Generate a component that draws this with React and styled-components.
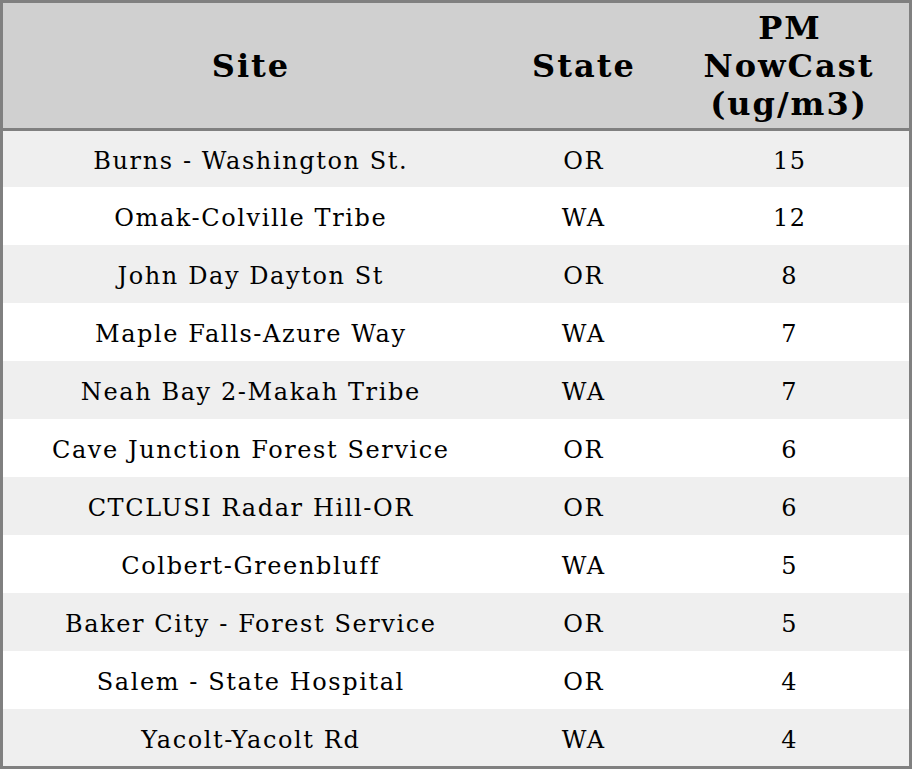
import styled, { createGlobalStyle } from "styled-components";

const GlobalStyle = createGlobalStyle`
    html, body {
        margin: 0;
        padding: 0;
        background: #fff;
    }
`;

const rows = [
    { site: "Burns - Washington St.", state: "OR", pm: 15 },
    { site: "Omak-Colville Tribe", state: "WA", pm: 12 },
    { site: "John Day Dayton St", state: "OR", pm: 8 },
    { site: "Maple Falls-Azure Way", state: "WA", pm: 7 },
    { site: "Neah Bay 2-Makah Tribe", state: "WA", pm: 7 },
    { site: "Cave Junction Forest Service", state: "OR", pm: 6 },
    { site: "CTCLUSI Radar Hill-OR", state: "OR", pm: 6 },
    { site: "Colbert-Greenbluff", state: "WA", pm: 5 },
    { site: "Baker City - Forest Service", state: "OR", pm: 5 },
    { site: "Salem - State Hospital", state: "OR", pm: 4 },
    { site: "Yacolt-Yacolt Rd", state: "WA", pm: 4 },
];

export default function App() {
    return (
        <>
            <GlobalStyle />
            <Table>
                <Header>
                    <HeadCell>Site</HeadCell>
                    <HeadCell>State</HeadCell>
                    <HeadCell>
                        PM
                        <br />
                        NowCast
                        <br />
                        (ug/m3)
                    </HeadCell>
                </Header>
                <Body>
                    {rows.map((r, i) => (
                        <Row key={i} $shaded={i % 2 === 0}>
                            <Cell>{r.site}</Cell>
                            <Cell>{r.state}</Cell>
                            <Cell>{r.pm}</Cell>
                        </Row>
                    ))}
                </Body>
            </Table>
        </>
    );
}

const Table = styled.div`
    width: 912px;
    height: 769px;
    box-sizing: border-box;
    border: 3px solid #808080;
    display: flex;
    flex-direction: column;
    font-family: "DejaVu Serif", serif;
    color: #000;
`;
const Header = styled.div`
    height: 125px;
    flex-shrink: 0;
    background-color: #d0d0d0;
    border-bottom: 3px solid #808080;
    display: grid;
    grid-template-columns: 494px 172px 1fr;
    align-items: center;
`;
const HeadCell = styled.div`
    text-align: center;
    font-size: 32px;
    font-weight: bold;
    line-height: 38px;
    letter-spacing: 2px;
    text-indent: 2px;
`;
const Body = styled.div`
    flex: 1;
    display: grid;
    grid-template-rows: 56px repeat(9, 58px) 1fr;
`;
const Row = styled.div`
    display: grid;
    grid-template-columns: 494px 172px 1fr;
    align-items: center;
    box-sizing: border-box;
    padding-top: 4px;
    background-color: ${(p) => (p.$shaded ? "#efefef" : "#ffffff")};
`;
const Cell = styled.div`
    text-align: center;
    font-size: 24px;
    line-height: 28px;
    letter-spacing: 1.6px;
    text-indent: 1.6px;
`;
